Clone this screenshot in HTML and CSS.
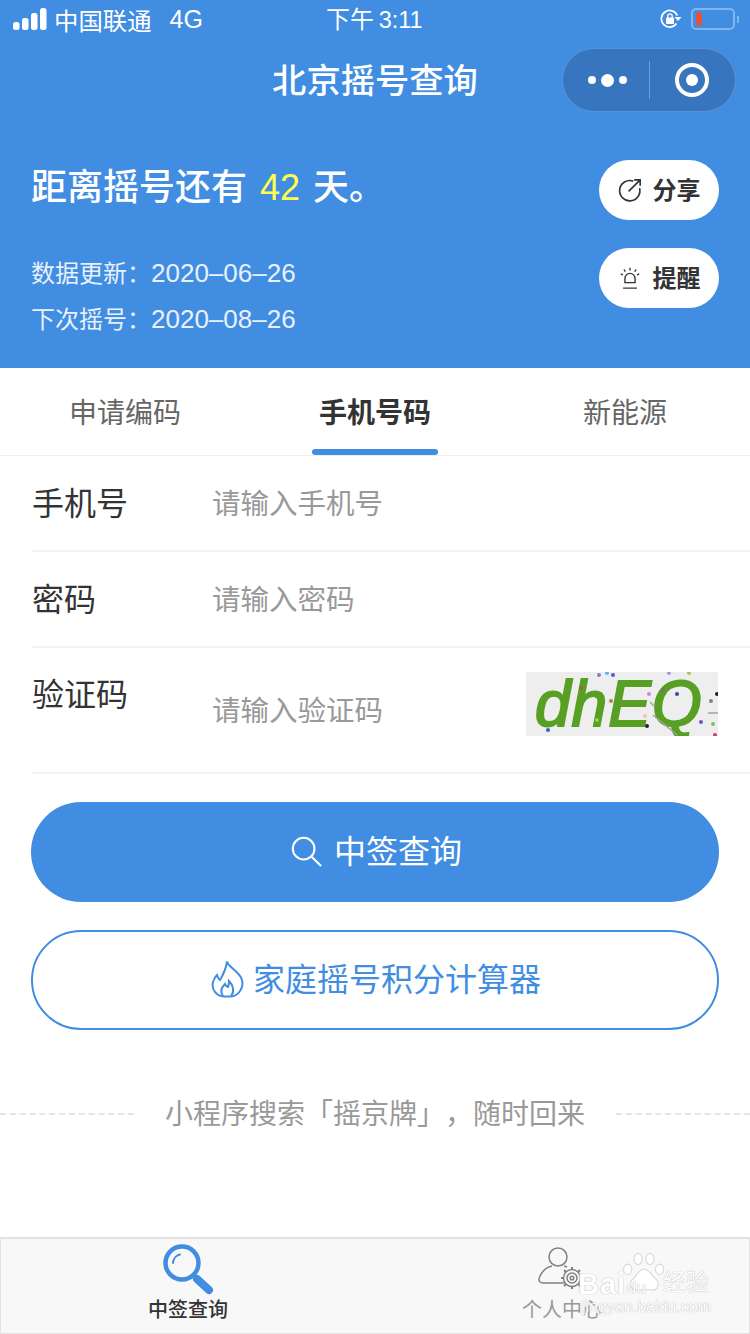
FILE: index.html
```html
<!DOCTYPE html>
<html lang="zh">
<head>
<meta charset="utf-8">
<title>北京摇号查询</title>
<link rel="stylesheet" href="styles.css">
</head>
<body>
<div class="page">
  <header class="hero">
    <div class="status">
      <div class="status-left">
        <svg class="signal" width="34" height="22" viewBox="0 0 34 22"><rect x="0" y="14" width="6.500" height="8" rx="2.500"/><rect x="9" y="10" width="6.500" height="12" rx="2.500"/><rect x="18" y="5" width="6.500" height="17" rx="2.500"/><rect x="27" y="0" width="6.500" height="22" rx="2.500"/></svg>
        <span class="carrier">中国联通</span>
        <span class="net">4G</span>
      </div>
      <div class="status-time">下午 <span class="clock">3:11</span></div>
      <div class="status-right">
        <svg class="lock" width="22" height="20" viewBox="0 0 22 20"><path d="M16.500 14.500A8.300 8.300 0 1 1 17.300 6.500" fill="none" stroke="#fff" stroke-width="1.800"/><path d="M14.500 8h7l-3.500 4z" fill="#fff"/><rect x="6" y="8.500" width="8" height="6.500" rx="1" fill="#fff"/><path d="M7.800 9V7a2.200 2.200 0 0 1 4.400 0v2" fill="none" stroke="#fff" stroke-width="1.300"/></svg>
        <div class="battery"><span class="battery-level"></span></div>
        <span class="battery-cap"></span>
      </div>
    </div>
    <div class="nav">
      <h1 class="nav-title">北京摇号查询</h1>
      <div class="capsule">
        <div class="capsule-dots"><i class="dot"></i><i class="dot dot-big"></i><i class="dot"></i></div>
        <div class="capsule-target"><i class="target-core"></i></div>
      </div>
    </div>
    <div class="summary">
      <div class="summary-text">
        <p class="headline">距离摇号还有 <em class="days">42</em> 天。</p>
        <p class="meta meta-first">数据更新：<span class="num">2020–06–26</span></p>
        <p class="meta">下次摇号：<span class="num">2020–08–26</span></p>
      </div>
      <div class="summary-actions">
        <button class="pill">
          <svg width="24" height="24" viewBox="0 0 26 26" fill="none" stroke="#333" stroke-width="1.800"><path d="M16.500 3.400A11 11 0 1 0 23.400 11"/><path d="M11.500 14.500L23.500 2.500M17.500 2h6.500v6.500"/></svg>
          <span class="pill-text">分享</span>
        </button>
        <button class="pill">
          <svg width="24" height="24" viewBox="0 0 26 26" fill="none" stroke="#333" stroke-width="1.500"><path d="M7.500 18v-4.500a5.500 5.500 0 0 1 11 0V18zM5.500 24h15"/><path d="M13 2v3M6.500 3.800l1.500 2.400M19.500 3.800L18 6.200M3 8.500l2.300 1.200M23 8.500l-2.300 1.200"/></svg>
          <span class="pill-text">提醒</span>
        </button>
      </div>
    </div>
  </header>

  <nav class="tabs">
    <div class="tab">申请编码</div>
    <div class="tab tab-active">手机号码</div>
    <div class="tab">新能源</div>
  </nav>

  <form class="form">
    <div class="row">
      <span class="label">手机号</span>
      <span class="placeholder">请输入手机号</span>
    </div>
    <div class="row">
      <span class="label">密码</span>
      <span class="placeholder">请输入密码</span>
    </div>
    <div class="row row-captcha">
      <span class="label label-top">验证码</span>
      <span class="placeholder placeholder-low">请输入验证码</span>
      <div class="captcha">
        <span class="captcha-text">dhEQ</span>
        <svg class="captcha-noise" width="192" height="64" viewBox="0 0 192 64"><circle cx="73" cy="3" r="2" fill="#8a7ac0"/><circle cx="81" cy="1" r="2" fill="#6ab0e0"/><circle cx="87" cy="3" r="2" fill="#5a5ad0"/><circle cx="143" cy="1" r="2" fill="#b090e0"/><circle cx="163" cy="1" r="2" fill="#b0c050"/><circle cx="191" cy="22" r="2" fill="#222"/><circle cx="185" cy="29" r="2" fill="#7a80a0"/><circle cx="175" cy="50" r="2" fill="#7050d0"/><circle cx="187" cy="52" r="2" fill="#80c060"/><circle cx="189" cy="63" r="2" fill="#d04060"/><circle cx="121" cy="54" r="2" fill="#223"/><circle cx="119" cy="44" r="2" fill="#f0c0c0"/><circle cx="123" cy="22" r="2" fill="#d080f0"/><circle cx="137" cy="18" r="2" fill="#807070"/><circle cx="151" cy="22" r="2" fill="#3050a0"/><circle cx="55" cy="16" r="2" fill="#a06040"/><circle cx="22" cy="58" r="2" fill="#3060d0"/><circle cx="85" cy="29" r="2" fill="#b08050"/><circle cx="71" cy="48" r="2" fill="#90d060"/><path d="M127 43l24 20M182 41h10M124 30l4 4" stroke="#a8a0a8" stroke-width="1.500" fill="none"/></svg>
      </div>
    </div>
  </form>

  <div class="buttons">
    <button class="btn btn-primary">
      <svg class="btn-icon" width="32" height="32" viewBox="0 0 34 34" fill="none" stroke="#fff" stroke-width="2.200"><circle cx="14.500" cy="14.500" r="11.500"/><path d="M23 23l10 10"/></svg>
      <span class="btn-text">中签查询</span>
    </button>
    <button class="btn btn-outline">
      <svg class="btn-icon" width="34" height="38" viewBox="0 0 34 38" fill="none" stroke="#408de2" stroke-width="2"><path d="M16 1.500c1 5 10 9 14 16 4 8-1 18-10 19h-7C6 36 0 30 2 22c1-3 3-6 4-7 1 2 1 4 3 5 3-5 6-11 7-18.500z"/><path d="M12 36c-3-4-2-8 2-12 1 2 2 3 3 3 1-2 1-4 1-6 4 4 6 10 2 15"/></svg>
      <span class="btn-text">家庭摇号积分计算器</span>
    </button>
  </div>

  <div class="slogan">
    <span class="dash"></span>
    <span class="slogan-text">小程序搜索「摇京牌」，随时回来</span>
    <span class="dash"></span>
  </div>

  <footer class="tabbar">
    <div class="tabbar-item tabbar-on">
      <svg width="52" height="52" viewBox="0 0 52 52" fill="none"><circle cx="20" cy="20" r="16.500" stroke="#408de2" stroke-width="4.500"/><path d="M11 20a9 9 0 0 1 7-8.500" stroke="#408de2" stroke-width="2" stroke-linecap="round"/><path d="M35 36l12 11" stroke="#408de2" stroke-width="8" stroke-linecap="round"/></svg>
      <span class="tabbar-label">中签查询</span>
    </div>
    <div class="tabbar-item">
      <svg class="person" width="52" height="52" viewBox="0 0 52 52" fill="none" stroke="#808080" stroke-width="1.500"><circle cx="22" cy="12" r="9"/><path d="M28 38H7C3 38 2 35 4 31c3-6 7-9 12-10M28 21c1 .3 2 .6 3 1"/><circle cx="36" cy="33" r="8.500" fill="#f8f8f8"/><circle cx="36" cy="33" r="5"/><circle cx="36" cy="33" r="1.800"/><path d="M36 22v3M36 41v3M25 33h3M44 33h3M28 25l2 2M42 39l2 2M44 25l-2 2M30 39l-2 2" stroke-width="2"/></svg>
      <span class="tabbar-label">个人中心</span>
    </div>
    <div class="watermark">
      <svg class="paw" width="46" height="42" viewBox="0 0 62 56" fill="#fff" stroke="#d8d8d8" stroke-width="1.500"><ellipse cx="9" cy="23" rx="5.500" ry="7"/><ellipse cx="23" cy="9" rx="5.500" ry="7.500"/><ellipse cx="39" cy="9" rx="5.500" ry="7.500"/><ellipse cx="52" cy="23" rx="5.500" ry="7"/><path d="M31 23c-8 0-9 9-15 13-6 5-3 16 6 15 5 0 13-2 19 0 9 1 12-9 6-15-6-4-8-13-16-13z"/></svg>
      <span class="wm-brand">Bai</span><span class="wm-du">du</span><span class="wm-cn">经验</span>
      <span class="wm-url">jingyan.baidu.com</span>
    </div>
  </footer>
</div>
</body>
</html>
```

FILE: styles.css
```css
* { box-sizing: border-box; }
html, body { margin: 0; padding: 0; }
body { background: #fff; font-family: "Liberation Sans", "Noto Sans CJK SC", sans-serif; color: #333; }
p, h1 { margin: 0; font-weight: normal; }
em { font-style: normal; }
button { font-family: inherit; border: 0; padding: 0; }
.page { width: 750px; height: 1334px; display: flex; flex-direction: column; overflow: hidden; }

.hero { height: 368px; background: #408de2; color: #fff; flex: none; }
.status { height: 40px; display: flex; align-items: center; justify-content: space-between; padding: 0 11px 0 13px; position: relative; }
.status-left { display: flex; align-items: center; font-size: 24.400px; }
.signal { fill: #fff; margin-right: 7px; margin-top: -3px; }
.carrier { margin-right: 18px; margin-top: -2px; }
.net { font-size: 25px; margin-top: -1px; }
.status-time { position: absolute; left: 326px; top: 3px; font-size: 24px; line-height: 34px; word-spacing: -2px; }
.clock { font-size: 23.500px; font-weight: 500; }
.status-right { display: flex; align-items: center; margin-top: -2px; }
.lock { margin-right: 9px; }
.battery { width: 44px; height: 22px; border: 2px solid #80b6ee; border-radius: 5px; padding: 2px 3px; }
.battery-level { display: block; width: 6px; height: 14px; border-radius: 3px; background: #e8503e; }
.battery-cap { width: 2px; height: 7px; background: #80b6ee; margin-left: 2px; }

.nav { height: 80px; display: flex; align-items: center; justify-content: center; position: relative; }
.nav-title { font-size: 34.300px; font-weight: 500; padding-bottom: 4px; }
.capsule { position: absolute; right: 14px; top: 8px; width: 174px; height: 64px; border-radius: 32px; background: #3776bf; border: 1px solid #5b92d6; display: flex; align-items: center; }
.capsule-dots { width: 87px; height: 38px; padding-left: 3px; display: flex; align-items: center; justify-content: center; gap: 5px; border-right: 1px solid #6f9fd8; }
.dot { width: 8px; height: 8px; border-radius: 50%; background: #fff; }
.dot-big { width: 13px; height: 13px; }
.capsule-target { width: 34px; height: 34px; margin-left: 25px; border: 4px solid #fff; border-radius: 50%; display: flex; align-items: center; justify-content: center; }
.target-core { width: 12px; height: 12px; border-radius: 50%; background: #fff; }

.summary { display: flex; justify-content: space-between; padding: 40px 31px 0; }
.headline { font-size: 36px; font-weight: 500; line-height: 54px; margin-top: 1px; }
.days { color: #ffff4d; font-weight: 400; padding: 0 3px; }
.meta { font-size: 24px; height: 46px; line-height: 46px; color: #e8f1fc; }
.meta-first { margin-top: 36px; }
.num { font-size: 26px; line-height: 1; }
.summary-actions { display: flex; flex-direction: column; gap: 28px; }
.pill { width: 120px; height: 60px; border-radius: 30px; background: #fff; color: #333; display: flex; align-items: center; justify-content: center; gap: 11px; font-size: 24px; font-weight: 700; }
.pill-text { padding-bottom: 4px; }

.tabs { height: 88px; flex: none; display: flex; border-bottom: 1px solid #eee; }
.tab { flex: 1; display: flex; align-items: center; justify-content: center; font-size: 28px; color: #666; position: relative; padding-bottom: 2px; }
.tab-active { color: #333; font-weight: 700; }
.tab-active::after { content: ""; position: absolute; left: 62px; bottom: 0; width: 126px; height: 6px; border-radius: 3px; background: #408de2; }

.form { padding-left: 32px; }
.row { height: 96px; display: flex; align-items: center; border-bottom: 2px solid #f4f4f4; padding-bottom: 2px; }
.label { width: 180px; font-size: 32px; color: #333; flex: none; padding-bottom: 3px; }
.placeholder { font-size: 28.500px; color: #999; padding-bottom: 2px; }
.row-captcha { height: 126px; position: relative; border-bottom-width: 2px; }
.label-top { align-self: flex-start; margin-top: 21px; }
.placeholder-low { margin-top: 1px; }
.captcha { position: absolute; right: 32px; top: 24px; width: 192px; height: 64px; background: #eee; overflow: hidden; }
.captcha-text { position: absolute; left: 9px; top: -8px; font: italic 400 64px/80px "Liberation Sans", sans-serif; letter-spacing: 1px; -webkit-text-stroke: 2px #57a024; color: #57a024; white-space: nowrap; }
.captcha-noise { position: absolute; left: 0; top: 0; }

.buttons { padding: 28px 31px 0; display: flex; flex-direction: column; gap: 28px; }
.btn { height: 100px; border-radius: 50px; display: flex; align-items: center; justify-content: center; font-size: 32px; }
.btn-icon { margin: -2px 0 0 2px; }
.btn-text { padding-bottom: 6px; }
.btn-primary { background: #408de2; color: #fff; gap: 12px; }
.btn-outline { background: #fff; color: #408de2; border: 2px solid #408de2; gap: 8px; }

.slogan { display: flex; align-items: center; justify-content: space-between; margin-top: 66px; height: 36px; }
.slogan-text { font-size: 28px; color: #999; white-space: nowrap; padding-bottom: 4px; text-spacing-trim: space-all; }
.dash { width: 134px; height: 0; border-top: 2px dashed #e6e6e6; }

.tabbar { margin-top: auto; height: 97px; flex: none; display: flex; background: #f8f8f8; border: 1px solid #e2e2e2; border-top: 2px solid #e2e2e2; position: relative; }
.tabbar-item { width: 375px; display: flex; flex-direction: column; align-items: center; font-size: 20px; color: #999; line-height: 24px; padding-top: 4px; }
.tabbar-on { color: #333; font-weight: 500; }
.tabbar-item svg { display: block; flex: none; }
.person { margin-top: 2px; margin-bottom: -2px; }
.tabbar-label { margin-top: 3px; }
.watermark { position: absolute; left: 575px; top: 10px; width: 140px; height: 78px; color: #fff; text-shadow: 0 0 1px #999; }
.paw { position: absolute; left: 45px; top: 3px; }
.wm-brand { position: absolute; left: 2px; top: 17px; font-size: 29px; font-weight: 700; line-height: 36px; letter-spacing: 1px; }
.wm-du { position: absolute; left: 51px; top: 28px; font-size: 17px; line-height: 22px; color: #fff; }
.wm-cn { position: absolute; left: 87px; top: 17px; font-size: 23px; line-height: 32px; }
.wm-url { position: absolute; left: 6px; top: 47px; font-size: 16px; line-height: 22px; white-space: nowrap; }
```
